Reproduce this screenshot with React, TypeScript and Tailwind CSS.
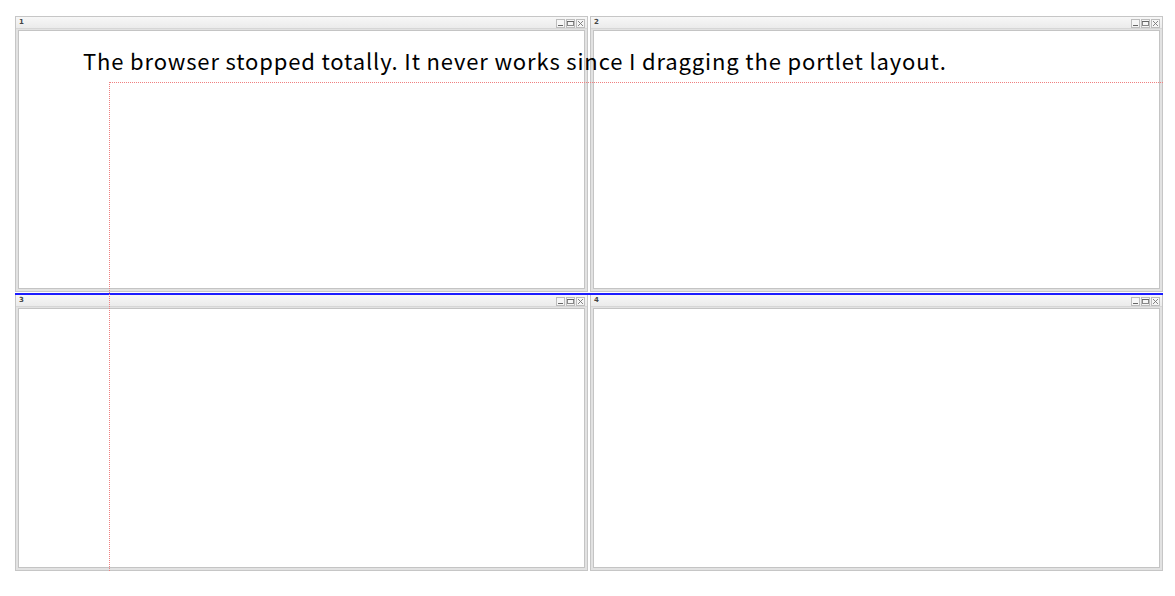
import React from 'react';

function ToolButton({ kind }: { kind: 'min' | 'max' | 'close' }) {
  return (
    <div className="w-[9px] h-[9px] border border-[#bdbdbd] bg-[#f6f6f6] flex items-center justify-center">
      <svg width="7" height="7" viewBox="0 0 7 7">
        {kind === 'min' && <rect x="1" y="5" width="5" height="1" fill="#666" />}
        {kind === 'max' && (
          <>
            <rect x="0.5" y="1.5" width="6" height="4" fill="none" stroke="#888" strokeWidth="1" />
            <rect x="0" y="1" width="7" height="1" fill="#666" />
          </>
        )}
        {kind === 'close' && (
          <path d="M1 1 L6 6 M6 1 L1 6" stroke="#777" strokeWidth="0.9" />
        )}
      </svg>
    </div>
  );
}

function Portlet({ title }: { title: string }) {
  return (
    <div className="flex flex-col border border-[#c6c6c6] bg-[#e2e2e2] px-[2px] pb-[2px]">
      {/* header */}
      <div className="h-[12px] flex items-center justify-between bg-gradient-to-b from-[#f7f7f7] to-[#ebebeb] -mx-[2px] pl-[3px] pr-[2px] border-b border-[#d6d6d6]">
        <span className="text-[7px] font-bold text-[#444] leading-none font-['DejaVu_Sans',sans-serif]">{title}</span>
        <div className="flex gap-[1px] mt-[1px]">
          <ToolButton kind="min" />
          <ToolButton kind="max" />
          <ToolButton kind="close" />
        </div>
      </div>
      {/* body */}
      <div className="flex-1 bg-white border border-[#c4c4c4] mt-[1px]" />
    </div>
  );
}

export default function App() {
  return (
    <div className="relative w-[1175px] h-[596px] bg-white overflow-hidden">
      <div className="pl-[15px] pt-[16px]">
        <div className="w-[1148px] grid grid-cols-2 grid-rows-[276px_277px] gap-[2px]">
          <Portlet title="1" />
          <Portlet title="2" />
          <Portlet title="3" />
          <Portlet title="4" />
        </div>
      </div>

      {/* drop indicator */}
      <div className="absolute left-[15px] top-[293px] w-[1148px] h-[2px] bg-[#1c1cff]" />

      {/* drag placeholder */}
      <div className="absolute left-[109px] top-[82px] w-[1054px] h-[489px] border-t border-l border-dotted border-[#f08080]" />

      {/* message */}
      <p className="absolute left-[83px] top-[49px] text-[22px] leading-none tracking-[0.85px] text-black whitespace-nowrap font-['Noto_Sans_CJK_KR','Noto_Sans',sans-serif]">
        The browser stopped totally. It never works since I dragging the portlet layout.
      </p>
    </div>
  );
}
